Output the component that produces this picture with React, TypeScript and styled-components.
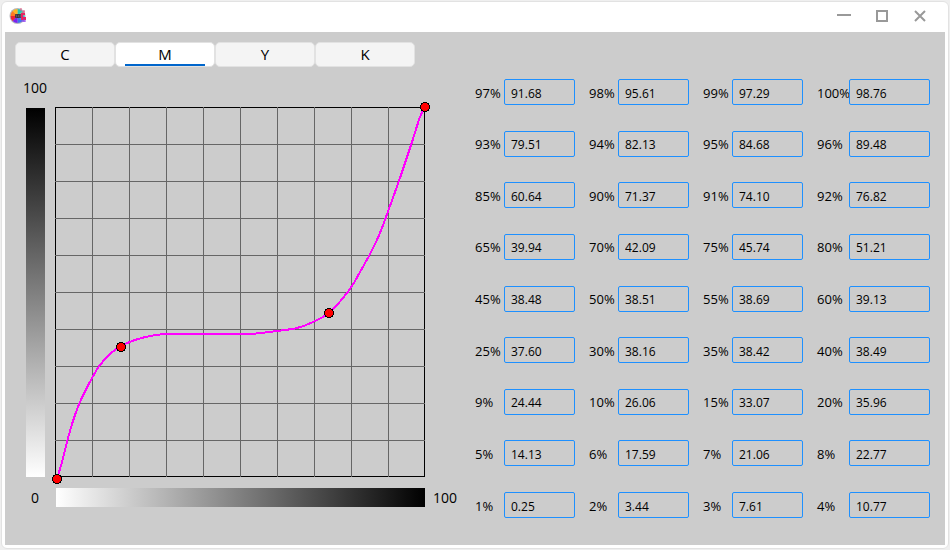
import React, { useState } from "react";
import styled, { createGlobalStyle } from "styled-components";

const GlobalStyle = createGlobalStyle`
  * { box-sizing: border-box; }
  body { margin: 0; background: #efefef; color: #000; font-family: "Open Sans", "Noto Sans", sans-serif; }
  button, input { font-family: inherit; color: inherit; }
`;

const Page = styled.div`
  min-height: 100vh;
  padding: 1px;
  display: flex;
`;

const Window = styled.main`
  flex: 1;
  display: flex;
  flex-direction: column;
  padding: 0 3px 3px;
  background: #fff;
  border: 1px solid #e2e2e2;
  border-radius: 6px;
`;

const TitleBar = styled.header`
  height: 30px;
  padding: 0 6px 2px 4px;
  display: flex;
  align-items: center;
  justify-content: space-between;
`;

const WindowControls = styled.div`
  display: flex;
`;

const WindowButton = styled.button`
  width: 38px;
  height: 28px;
  padding: 0;
  border: 0;
  background: none;
  display: grid;
  place-items: center;
`;

const Content = styled.div`
  flex: 1;
  display: flex;
  gap: 15px;
  padding: 10px 15px 27px 10px;
  background: #ccc;
`;

const CurvePanel = styled.section`
  flex: none;
  display: flex;
  flex-direction: column;
`;

const TabList = styled.div`
  display: grid;
  grid-template-columns: repeat(4, 100px);
`;

const Tab = styled.button<{ $active: boolean }>`
  height: 25px;
  padding: 0 9px;
  border: 1px solid #e2e2e2;
  border-radius: 5px;
  background: ${(p) => (p.$active ? "#fff" : "#f4f4f4")};
  font-size: 15px;
  line-height: 19px;
`;

const TabLabel = styled.span<{ $active: boolean }>`
  display: block;
  padding-top: 2px;
  border-bottom: 2px solid ${(p) => (p.$active ? "#0066cc" : "transparent")};
`;

const ChartGrid = styled.div`
  display: grid;
  grid-template-columns: 40px 370px 35px;
  grid-template-rows: 40px 370px 11px 19px;
`;

const AxisLabel = styled.span<{ $area: string; $align?: string }>`
  grid-area: ${(p) => p.$area};
  justify-self: center;
  align-self: ${(p) => p.$align ?? "center"};
  padding-top: 1px;
  font-size: 14px;
  line-height: 20px;
`;

const EndLabel = styled(AxisLabel)`
  justify-self: start;
  padding: 0 0 0 8px;
`;

const VerticalRamp = styled.div`
  grid-area: 2 / 1;
  width: 19px;
  margin: 1px 0 0 11px;
  background: linear-gradient(to top, #fff, #000);
`;

const HorizontalRamp = styled.div`
  grid-area: 4 / 2;
  margin-left: 1px;
  background: linear-gradient(to right, #fff, #000);
`;

const Chart = styled.svg`
  grid-area: 2 / 2;
  display: block;
  overflow: visible;
`;

const ValueGrid = styled.section`
  flex: 1;
  min-width: 0;
  margin-top: 37px;
  display: grid;
  grid-template-columns: 100fr 100fr 100fr 113fr;
  column-gap: 14px;
  align-content: space-between;
`;

const ValueField = styled.div<{ $wide: boolean }>`
  display: grid;
  grid-template-columns: ${(p) => (p.$wide ? "32px" : "29px")} minmax(0, 1fr);
  align-items: center;
`;

const ValueLabel = styled.label`
  padding-top: 1px;
  font-size: 13px;
  line-height: 20px;
  white-space: nowrap;
`;

const ValueInput = styled.input`
  width: 100%;
  height: 26px;
  padding: 2px 6px 0;
  border: 1px solid #1e90ff;
  border-radius: 2px;
  background: transparent;
  font-size: 12px;
`;

const curvePoints = [
  [2, 372], [7, 355], [12, 335], [18, 314], [25, 295], [37, 271], [45, 258],
  [55, 247], [66, 239], [80, 233], [95, 229], [110, 227], [125, 227], [190, 227],
  [205, 226], [222, 224], [242, 221], [258, 215], [274, 206], [288, 191],
  [297, 179], [305, 165], [315, 147], [325, 126], [335, 99], [346, 68],
  [357, 35], [365, 10], [370, 0],
];

/** Catmull-Rom spline through the points, as cubic segments. */
function splinePath(points: number[][]) {
  return points.slice(1).reduce((path, [x2, y2], i) => {
    const [x1, y1] = points[i];
    const [x0, y0] = points[i - 1] ?? points[i];
    const [x3, y3] = points[i + 2] ?? points[i + 1];
    return `${path}C${x1 + (x2 - x0) / 6} ${y1 + (y2 - y0) / 6} ${x2 - (x3 - x1) / 6} ${y2 - (y3 - y1) / 6} ${x2} ${y2}`;
  }, `M${points[0].join(" ")}`);
}

const handles = [[2, 372], [66, 240], [274, 206], [370, 0]];

const rows: [string, string][][] = [
  [["97", "91.68"], ["98", "95.61"], ["99", "97.29"], ["100", "98.76"]],
  [["93", "79.51"], ["94", "82.13"], ["95", "84.68"], ["96", "89.48"]],
  [["85", "60.64"], ["90", "71.37"], ["91", "74.10"], ["92", "76.82"]],
  [["65", "39.94"], ["70", "42.09"], ["75", "45.74"], ["80", "51.21"]],
  [["45", "38.48"], ["50", "38.51"], ["55", "38.69"], ["60", "39.13"]],
  [["25", "37.60"], ["30", "38.16"], ["35", "38.42"], ["40", "38.49"]],
  [["9", "24.44"], ["10", "26.06"], ["15", "33.07"], ["20", "35.96"]],
  [["5", "14.13"], ["6", "17.59"], ["7", "21.06"], ["8", "22.77"]],
  [["1", "0.25"], ["2", "3.44"], ["3", "7.61"], ["4", "10.77"]],
];

const lines = [1, 2, 3, 4, 5, 6, 7, 8, 9];

function Logo() {
  const colors = ["#21c7b5", "#58c7a0", "#3f9bed", "#3978ed", "#7a22f2", "#ed2438", "#ff7a22", "#ffb51f"];
  return (
    <svg width="18" height="18" viewBox="0 0 18 18" aria-hidden="true">
      <circle cx="8.500" cy="9" r="8" fill="#b4b8bd" />
      {colors.map((c, i) => {
        const a = ((i * 45 - 90) * Math.PI) / 180;
        const b = a + Math.PI / 4;
        return (
          <path
            key={c}
            fill={c}
            d={`M8.500 9L${8.5 + 7 * Math.cos(a)} ${9 + 7 * Math.sin(a)}A7 7 0 0 1 ${8.5 + 7 * Math.cos(b)} ${9 + 7 * Math.sin(b)}Z`}
          />
        );
      })}
      <path d="M12 6h4v2h-2v2h3v3h-5z" fill="#e92562" />
      <path d="M12 1v3M13 5h3M15 3v2" stroke="#e85382" />
      <path d="M12 14h5M15 12v3" stroke="#8a35ee" />
      <rect x="6" y="7" width="6" height="4" rx="1" fill="#303038" />
      <path d="M8.500 8H7v1h1v1H6.500M9.500 8h2v2h-2z" fill="none" stroke="#6d6972" strokeWidth=".6" />
    </svg>
  );
}

export default function App() {
  const [active, setActive] = useState("M");
  return (
    <>
      <GlobalStyle />
      <Page>
        <Window>
          <TitleBar>
            <Logo />
            <WindowControls>
              <WindowButton type="button" aria-label="Minimize">
                <svg width="14" height="12"><path d="M0 5h14" stroke="#999" strokeWidth="2" /></svg>
              </WindowButton>
              <WindowButton type="button" aria-label="Maximize">
                <svg width="12" height="12"><path d="M1 1h10v10H1z" fill="none" stroke="#999" strokeWidth="2" /></svg>
              </WindowButton>
              <WindowButton type="button" aria-label="Close">
                <svg width="12" height="12"><path d="M1 1l10 10M11 1L1 11" stroke="#999" strokeWidth="2" /></svg>
              </WindowButton>
            </WindowControls>
          </TitleBar>
          <Content>
            <CurvePanel>
              <TabList role="tablist">
                {["C", "M", "Y", "K"].map((name) => (
                  <Tab
                    key={name}
                    type="button"
                    role="tab"
                    aria-selected={name === active}
                    $active={name === active}
                    onClick={() => setActive(name)}
                  >
                    <TabLabel $active={name === active}>{name}</TabLabel>
                  </Tab>
                ))}
              </TabList>
              <ChartGrid>
                <AxisLabel $area="1 / 1">100</AxisLabel>
                <VerticalRamp />
                <Chart width="370" height="370" viewBox="0 0 370 370" role="img" aria-label="Tone curve" shapeRendering="crispEdges">
                  <rect x="0.5" y="0.5" width="369" height="369" fill="none" stroke="#000" />
                  {lines.map((n) => (
                    <path key={n} d={`M${n * 37 + 0.5} 0V370M0 ${n * 37 + 0.5}H370`} stroke="#666" />
                  ))}
                  <path d={splinePath(curvePoints)} fill="none" stroke="#f0f" strokeWidth="2" />
                  {handles.map(([x, y]) => (
                    <circle key={x} cx={x} cy={y} r="4.500" fill="#f00" stroke="#000" />
                  ))}
                </Chart>
                <AxisLabel $area="4 / 1">0</AxisLabel>
                <HorizontalRamp />
                <EndLabel $area="4 / 3">100</EndLabel>
              </ChartGrid>
            </CurvePanel>
            <ValueGrid>
              {rows.map((row) =>
                row.map(([percent, value], col) => (
                  <ValueField key={percent} $wide={col === 3}>
                    <ValueLabel htmlFor={`v${percent}`}>{percent}%</ValueLabel>
                    <ValueInput id={`v${percent}`} defaultValue={value} />
                  </ValueField>
                ))
              )}
            </ValueGrid>
          </Content>
        </Window>
      </Page>
    </>
  );
}
